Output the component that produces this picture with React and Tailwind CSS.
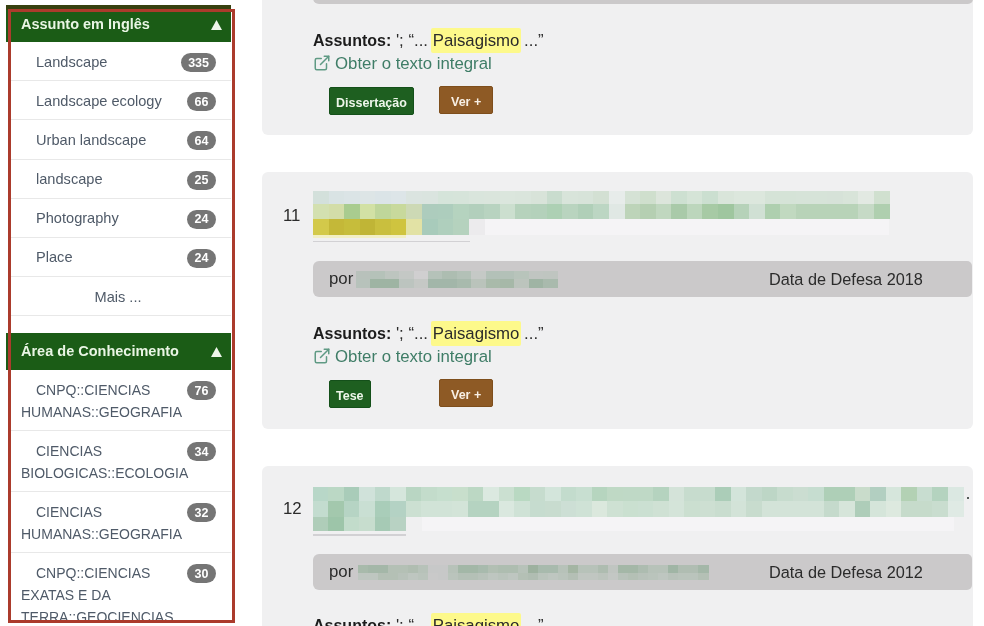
import React from "react";
import { ExternalLink } from "lucide-react";

const FONT = "font-['Liberation_Sans',Arial,sans-serif]";

function Mosaic({ width, height, rows, className = "" }) {
  return (
    <svg width={width} height={height} viewBox={`0 0 ${width} ${height}`} className={className} shapeRendering="crispEdges">
      {rows.flatMap((r, i) =>
        r.colors
          ? r.colors.map((c, j) => (
              <rect key={`${i}-${j}`} x={(r.x || 0) + j * r.cell} y={r.y} width={r.cell + 0.5} height={r.h} fill={c} />
            ))
          : [<rect key={`${i}`} x={r.x} y={r.y} width={r.w} height={r.h} fill={r.fill} />]
      )}
    </svg>
  );
}

const title2 = [
  { y: 0, h: 13, cell: 15.6, colors: "#d3e0db #d9e3e4 #dbe4e6 #dde5e6 #dbe4e7 #dde5e8 #dbe4e0 #dae4df #d5e4da #d6e4da #d9e5dc #dae5dc #dbe6dd #dae5dc #d8e3d9 #c9dcce #d8e4da #d7e3d9 #d3e0d3 #e7ecea #d5e2d5 #cfdfcd #dce5db #cde0d1 #d5e4d7 #cbdfd0 #d9e5da #dce7dd #dce7dd #d5e3d7 #d5e3d7 #d6e3d8 #d6e3d8 #d6e2d8 #d8e4d9 #e2e9e2 #d0e0cf".split(" ") },
  { y: 13, h: 15, cell: 15.6, colors: "#d3e0b0 #d3dda8 #a9cc8f #d2e1a4 #bfd69a #c8d99c #cdd9b5 #adccbd #adcdbd #b5d3bf #b2cfbc #b8d3c0 #ccdfcf #b6d2bc #b4d1bb #add0b4 #b9d4bf #b0cfb8 #bcd6c3 #e0e8e4 #bdd4b9 #b5cfb2 #c0d7bf #a9caa9 #bcd6bc #a7caa5 #9fc69f #b6d2b9 #d0e0d4 #aecfaf #c1d9c0 #b8d3b8 #b8d3b8 #b8d3b8 #b8d3b8 #c6dac6 #afcfaf".split(" ") },
  { x: 171, y: 28, w: 406, h: 16, fill: "#f5f4f6" },
  { y: 28, h: 16, cell: 15.6, colors: "#d3c94a #c4b838 #c6bd3b #c0b536 #c9bf3e #cfc43f #e2e2a5 #a8cbbb #afcfbd #b5d2be #ecebed".split(" ") },
  { x: 0, y: 44, w: 93, h: 3, fill: "#f2efc4" },
  { x: 0, y: 50, w: 157, h: 1.5, fill: "#d2d1d4" },
];

const title3 = [
  { y: 0, h: 14, cell: 15.5, colors: "#b8d7c8 #bbd8c5 #a9ccb9 #d0e2da #bfd9cc #d5e6dc #b9d6c3 #c3dccb #c6dfce #c8dfcc #bcd8c4 #dbe9e0 #cbe0d1 #b9d9c2 #c6dcce #d3e5db #c3dccd #c8dfd1 #b6d5bf #bfd9c5 #bfd9c6 #bfd9c6 #b5d3bf #d4e3d9 #c7dcce #c7dcce #abcdb8 #d3e4da #c3d9cc #bdd6c6 #c7dcce #cbddd1 #c6ddd0 #aecfb7 #aecfb7 #c9dccb #b2cfc1 #d6e6dc #b3d1b4 #c8ddd0 #b4d3bf #dbe8e2".split(" ") },
  { y: 14, h: 16, cell: 15.5, colors: "#c3dccf #a3c8ad #b6d4c4 #c9dfd3 #a9cdb9 #b4d2c4 #cce0d2 #d1e3d7 #d1e3d7 #d3e4d8 #b5d3c1 #b5d3c1 #dae8df #cfe2d6 #c6dccf #c8dccf #cddfd5 #cfe2d6 #dbe8dd #cee1d3 #cae0d0 #cbe0d2 #cfe1d4 #d4e4d9 #cbdfd0 #cddfd2 #c9ddcf #d3e3d8 #c8dcce #d3e3d8 #d3e3d8 #d3e3d8 #d3e3d8 #c5dacc #d6e5da #aecdb9 #d5e5da #dde9df #c6dbcb #c6dbcb #c9ddcf #dfeae4".split(" ") },
  { x: 109, y: 30, w: 533, h: 14, fill: "#f5f4f6" },
  { y: 30, h: 14, cell: 15.5, colors: "#afcdb9 #9dc5a9 #c2dccb #c7ddce #a6cab5 #b8d2c3".split(" ") },
  { x: 0, y: 47, w: 93, h: 2, fill: "#d2d1d4" },
  { x: 655, y: 10, w: 2, h: 2, fill: "#555b58" },
];

const por2 = [
  { y: 0, h: 8, cell: 14.4, colors: "#b8c1bb #b5c2b9 #bdc5bf #c4c8c5 #d0cfd0 #b5c2b9 #adbdb1 #b3c1b7 #c5c9c6 #b3c1b8 #b3c1b8 #b8c4bb #c0c5c1 #bfc5c0".split(" ") },
  { y: 8, h: 9, cell: 14.4, colors: "#b7c2bb #9eb4a3 #9eb4a3 #bcc4bf #c5c8c5 #a2b6a9 #a2b6a9 #a8baad #bac3bb #a9baaa #a6b8a8 #bcc4bd #9fb4a4 #a9baad".split(" ") },
];

const por3 = [
  { x: 2, y: 0, h: 8, cell: 10, colors: "#a8baab #a4b7a8 #a4b7a8 #b4c0b5 #b4c0b5 #b0bdb1 #b7c2b9 #c7c8c8 #c7c8c8 #b7c2b9 #a3b7a7 #a3b7a7 #a8baad #b2bfb3 #aebdb0 #aebdb0 #b7c2b9 #9db19f #a8baad #a8baad #b7c2b9 #a4b5a3 #b7c2b9 #b7c2b9 #aebcb0 #c0c5c1 #a4b7a7 #a4b7a7 #adbcb0 #b7c2b9 #b7c2b9 #a0b5a5 #b0bdb2 #b0bdb2 #a4b7a8".split(" ") },
  { x: 2, y: 8, h: 7, cell: 10, colors: "#bec6c0 #bec6c0 #b4c0b5 #b4c0b5 #b8c2ba #bec6c0 #bac4bc #c9c9c9 #c7c8c8 #bac4bc #b4c0b6 #b4c0b6 #b8c2ba #bec6c0 #bac4bc #bec6c0 #b4c0b5 #b0bdb2 #bac4bc #bec6c0 #bac4bc #b4bfb5 #c0c6c1 #c0c6c1 #bcc4bd #c3c7c4 #b8c2ba #b4c0b5 #b8c2ba #bac4bc #bec6c0 #b8c2ba #bac4bc #bac4bc #b4c0b5".split(" ") },
];

function Triangle() {
  return (
    <svg width="11" height="10" viewBox="0 0 11 10" className="shrink-0">
      <polygon points="5.5,0 11,10 0,10" fill="#eef5ea" />
    </svg>
  );
}

function Header({ children, className = "" }) {
  return (
    <div className={`flex h-[37px] items-center justify-between bg-[#1b5c16] pl-[15px] pr-[9px] text-[14.5px] font-bold text-[#e9f5e4] ${className}`}>
      <span>{children}</span>
      <Triangle />
    </div>
  );
}

function Badge({ children }) {
  return (
    <span className="float-right ml-1 mt-[2.5px] flex h-[19px] min-w-[29px] items-center justify-center rounded-full bg-[#757575] px-[7px] indent-0 text-[12.5px] font-bold text-white">
      {children}
    </span>
  );
}

function Item({ label, count, tall }) {
  return (
    <div className={`border-b border-[#e8e8e8] pb-[7.5px] pl-[10px] pr-[15px] pt-[8.5px] indent-[15px] leading-[22px] text-[#4f5a68] ${tall ? "text-[14px]" : "h-[39.2px] text-[14.6px]"}`}>
      <Badge>{count}</Badge>
      {label}
    </div>
  );
}

function Sidebar() {
  return (
    <aside className="mt-[5px] h-[616px] w-[231px] shrink-0 overflow-hidden pl-[6px]">
      <Header className="border-t-[5px] border-[#37400f] pb-[2px]">Assunto em Inglês</Header>
      <div className="ml-[5px]">
        <Item label="Landscape" count="335" />
        <Item label="Landscape ecology" count="66" />
        <Item label="Urban landscape" count="64" />
        <Item label="landscape" count="25" />
        <Item label="Photography" count="24" />
        <Item label="Place" count="24" />
        <div className="h-[39.2px] border-b border-[#e8e8e8] pl-[10px] pr-[16px] pt-[8.5px] text-center text-[14.6px] leading-[22px] text-[#4f5a68]">Mais ...</div>
        <div className="h-[17px]" />
      </div>
      <Header className="pt-px">Área de Conhecimento</Header>
      <div className="ml-[5px]">
        <Item tall label="CNPQ::CIENCIAS HUMANAS::GEOGRAFIA" count="76" />
        <Item tall label="CIENCIAS BIOLOGICAS::ECOLOGIA" count="34" />
        <Item tall label="CIENCIAS HUMANAS::GEOGRAFIA" count="32" />
        <Item tall label="CNPQ::CIENCIAS EXATAS E DA TERRA::GEOCIENCIAS" count="30" />
      </div>
    </aside>
  );
}

function Subjects({ type }) {
  return (
    <div>
      <p className="text-[16.8px] leading-[22px] text-[#2b2b2b]">
        <b className="text-[16px] font-bold text-[#1c1c1c]">Assuntos:</b> '; “...{" "}
        <span className="-mx-[2px] rounded-[2px] bg-[#fdf98b] px-[2px] py-[3px]">Paisagismo</span> ...”
      </p>
      <a className="mt-px flex items-center gap-[4px] text-[16.8px] leading-[22px] text-[#3f7d67]">
        <ExternalLink size={18} strokeWidth={2} className="-mt-[3px] text-[#5f9a84]" />
        Obter o texto integral
      </a>
      <div className="mt-[12px] flex items-start pl-4">
        <div className="w-[110px]">
          <span className="inline-flex h-[28px] items-center rounded-[2px] border border-[#14501a] bg-[#1e5f20] px-[6px] pt-[5px] text-[12.5px] font-bold text-[#eef6ea]">{type}</span>
        </div>
        <span className="-mt-px inline-flex h-[28px] items-center rounded-[2px] border border-[#7e4e1c] bg-[#8e5a25] px-[11px] pt-[5px] text-[12.5px] font-bold text-[#f8efe4]">Ver +</span>
      </div>
    </div>
  );
}

function Bar({ mosaic, year }) {
  return (
    <div className="flex h-[36px] items-center rounded-l-[6px] rounded-r-[5px] bg-[#cbc9ca] pl-4 text-[16.8px] text-[#2b2b2b]">
      <span className="w-[27px] shrink-0">por</span>
      <div className="w-[413px] shrink-0">
        <Mosaic width={mosaic.w} height={mosaic.h} rows={mosaic.rows} className="block" />
      </div>
      <span className="whitespace-nowrap text-[16.3px]">Data de Defesa {year}</span>
    </div>
  );
}

export default function App() {
  return (
    <div className={`flex h-[626px] w-[984px] overflow-hidden bg-white blur-[0.35px] ${FONT}`}>
      <Sidebar />
      <main className="ml-[31px] w-[711px] shrink-0">
        <section className="-mt-[40px] rounded-md bg-[#f0f0f1] pb-[20px] pl-[51px] pt-[8px]">
          <div className="h-[36px] rounded-r-[5px] rounded-l-[6px] bg-[#cbc9ca]" />
          <div className="mt-[26px]">
            <Subjects type="Dissertação" />
          </div>
        </section>

        <section className="mt-[37px] rounded-md bg-[#f0f0f1] pb-[21px] pr-px pt-[19px]">
          <div className="flex">
            <span className="w-[51px] shrink-0 pl-[21px] pt-[14px] text-[16.8px] leading-[22px] text-[#2b2b2b]">11</span>
            <Mosaic width={660} height={70} rows={title2} />
          </div>
          <div className="ml-[51px]">
            <Bar year="2018" mosaic={{ w: 240, h: 17, rows: por2 }} />
            <div className="mt-[26px]">
              <Subjects type="Tese" />
            </div>
          </div>
        </section>

        <section className="mt-[37px] rounded-md bg-[#f0f0f1] pb-[21px] pr-px pt-[21px]">
          <div className="flex">
            <span className="w-[51px] shrink-0 pl-[21px] pt-[11px] text-[16.8px] leading-[22px] text-[#2b2b2b]">12</span>
            <Mosaic width={660} height={67} rows={title3} />
          </div>
          <div className="ml-[51px]">
            <Bar year="2012" mosaic={{ w: 360, h: 15, rows: por3 }} />
            <div className="mt-[25px]">
              <Subjects type="Tese" />
            </div>
          </div>
        </section>
      </main>
      <div className="pointer-events-none absolute left-[8px] top-[9px] h-[614px] w-[227px] border-[3.5px] border-[#ab3b2c]" />
    </div>
  );
}
